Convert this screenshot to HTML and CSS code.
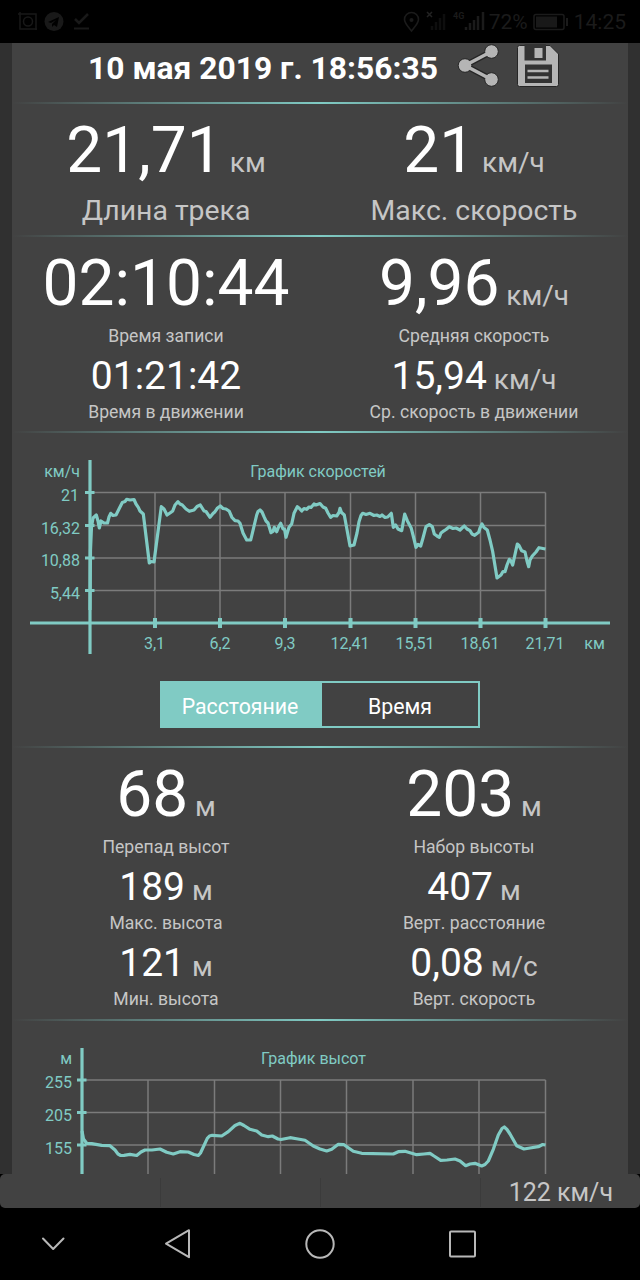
FILE: index.html
```html
<!DOCTYPE html>
<html lang="ru">
<head>
    <meta charset="UTF-8">
    <meta name="viewport" content="width=device-width, initial-scale=1.0">
    <title>10 мая 2019 г. 18:56:35</title>
    <link rel="stylesheet" href="styles.css">
</head>
<body>

    <div class="status-bar">
        <svg class="status-icons" width="76" height="22" viewBox="16 11 76 22">
            <path d="M18 14h18v16M20 12v17h17" fill="none" stroke="#181818" stroke-width="1.5"/>
            <circle cx="28" cy="21.5" r="4.500" fill="none" stroke="#181818" stroke-width="1.500"/>
            <circle cx="54" cy="21.5" r="9.500" fill="#191919"/>
            <path d="M48 22l11-5-2 10-3-2-2 2v-3l4-4-5 3z" fill="#000"/>
            <path d="M75 19l4 4 9-9" fill="none" stroke="#191919" stroke-width="2.5"/>
            <path d="M74 28.5h15" stroke="#191919" stroke-width="2"/>
        </svg>
        <div class="status-right">
            <svg width="84" height="22" viewBox="400 11 84 22">
                <path d="M408.500 31c-4-5-7-8-7-11.500a7 7 0 0 1 14 0c0 3.500-3 6.500-7 11.500z" fill="none" stroke="#1b1b1b" stroke-width="1.600"/>
                <circle cx="408.500" cy="20" r="2" fill="#1b1b1b"/>
                <path d="M424 12l5 5m0-5l-5 5" stroke="#222" stroke-width="1.500"/>
                <path d="M429 30v-4m4 4v-8m4 8v-12m4 12v-16" stroke="#0e0e0e" stroke-width="2.500"/>
                <path d="M463 30v-3m4 3v-7m4 7v-10m4 10v-14m5 14v-18" stroke="#1b1b1b" stroke-width="2.500"/>
                <text class="network" x="450" y="19">4G</text>
            </svg>
            <span class="percent">72%</span>
            <svg class="battery" width="36" height="18" viewBox="0 0 36 18">
                <rect x="1" y="1.500" width="30" height="15" rx="2" fill="none" stroke="#1b1b1b" stroke-width="1.500"/>
                <rect x="3" y="3.500" width="21" height="11" fill="#191919"/>
                <path d="M34 5v8" stroke="#1b1b1b" stroke-width="2"/>
            </svg>
            <span class="clock">14:25</span>
        </div>
    </div>

    <div class="screen">
        <div class="panel">
            <div class="header">
                <h1>10 мая 2019 г. 18:56:35</h1>
                <svg class="share-icon" width="42" height="44" viewBox="457 44 42 44">
                    <path d="M491.500 51.500L465 65.500l26.500 14" fill="none" stroke="#262626" stroke-width="6"/>
                    <g fill="#b5b5b5" stroke="#262626" stroke-width="1">
                        <circle cx="491.500" cy="51.500" r="6.800"/>
                        <circle cx="465" cy="65.500" r="6.800"/>
                        <circle cx="491.500" cy="79.500" r="6.800"/>
                    </g>
                    <path d="M491.500 51.500L465 65.500l26.500 14" fill="none" stroke="#b5b5b5" stroke-width="3.500"/>
                </svg>
                <svg class="save-icon" width="42" height="44" viewBox="517 44 42 44">
                    <path d="M519.500 45.500h30.500l8.500 8.500v30.500a2 2 0 0 1-2 2h-37a2 2 0 0 1-2-2v-37a2 2 0 0 1 2-2z" fill="#b5b5b5" stroke="#262626"/>
                    <path d="M524.500 44h21.500v16.500h-21.500z" fill="#333"/>
                    <rect x="534.500" y="48" width="8" height="10" fill="#b5b5b5"/>
                    <rect x="525" y="64.500" width="27" height="18.500" fill="#333"/>
                    <path d="M527.500 71h21M527.500 77.500h21" stroke="#b5b5b5" stroke-width="2.300"/>
                </svg>
            </div>
            <div class="separator"></div>

            <div class="stats stats-track">
                <div class="column">
                    <div class="value big">21,71<span class="unit"> км</span></div>
                    <div class="label large">Длина трека</div>
                </div>
                <div class="column">
                    <div class="value big">21<span class="unit"> км/ч</span></div>
                    <div class="label large">Макс. скорость</div>
                </div>
            </div>
            <div class="separator"></div>

            <div class="stats stats-time">
                <div class="column">
                    <div class="value big">02:10:44</div>
                    <div class="label">Время записи</div>
                    <div class="value">01:21:42</div>
                    <div class="label">Время в движении</div>
                </div>
                <div class="column">
                    <div class="value big">9,96<span class="unit"> км/ч</span></div>
                    <div class="label">Средняя скорость</div>
                    <div class="value">15,94<span class="unit"> км/ч</span></div>
                    <div class="label">Ср. скорость в движении</div>
                </div>
            </div>
            <div class="separator"></div>

            <div class="chart-section">
                <svg class="chart" width="616" height="248" viewBox="12 433 616 248">
                    <path class="grid" d="M90 492.500H545.500M90 525.500H545.500M90 558H545.500M90 590.500H545.500M155 492.500V623M220 492.500V623M285 492.500V623M350.500 492.500V623M415.500 492.500V623M480.500 492.500V623M545.500 492.500V623"/>
                    <path class="axis" d="M90 460V654M30 623H610M85 492.500H94.500M85 525.500H94.500M85 558H94.500M85 590.500H94.500"/>
                    <path class="tick" d="M155 618V628M220 618V628M285 618V628M350.500 618V628M415.500 618V628M480.500 618V628M545.500 618V628"/>
                    <polyline class="line" points="90,610 90.500,550 91.500,527 93,518 96.300,515 98,521 99.300,528 101,521 104,523 107.500,523 109,517 110.700,513.300 113,515.500 116,515 119,509 122.300,502.500 125,501.500 126.700,499.300 130,500 134,499.500 136,504 138.300,507.300 140,511 143.300,514 149.300,563 151,561.500 154,562 161.300,506.700 164,509 167,515 170,513 172.700,511 175,505 178,501.700 180,504 182.300,505 186,509 189.300,511.300 194,510 197,506.500 200.300,505 204,511 206,511.500 210,517.300 213,513.500 215,511.700 217.500,508 220.300,506 223,508.500 226,509 229.300,511.300 232,517.500 235,520.700 238,521 240,523.300 243,533 246.700,540 250.700,540 256.700,515 258,511.500 260,510 262,512 264,516.700 266,521 268,523 271,532.700 273,531.500 274.300,527.300 276.700,531.700 279,526 280.700,523.300 283,529 284.500,529 286,537.300 289,527.300 291.700,524 294,513.300 297.300,506.700 299,508 301.700,511 304,508.500 306.700,509.300 309,507 311,507.500 314,504 316,505 320,503.500 323,507 325.700,508.300 328,513 330.700,517.300 333,515.500 336.700,516 339,512.500 340,508.300 341.500,512.500 344.300,515 350,546 354,545 357,533 359,521.700 361,515.500 362.700,513.300 366,514.500 370,513.300 374,515.500 376.700,515 380,516.500 382,515 385,517.500 387.700,517 391.300,513.300 393.300,527.300 395.700,525 398,529 401.700,530.700 404.700,514 407.300,520.700 411.300,528.300 414,539 416,547.300 418,544.500 420.700,546 423,538 426,526.700 429.300,524.700 432.300,526.700 434.300,534 437,536 439.300,537.300 441,533 442.700,531.700 446,529.500 449.300,526.700 453,528.500 456,528 460,530 462,528 464.300,526 467,529 470,530.700 472,534 474.700,535.300 477,533.500 478.700,532.300 480,528 482,524 484,527.500 487.300,530 490,540 492.700,551.700 497,578 501,575 503,571.500 505,571.700 507,565 509.300,559.300 511,561 512.700,565 517.300,544 519,545.500 521.700,550.700 525,552 527,561 528.700,566.700 530,560 532.300,556 536,552 539,547.700 545.500,549"/>
                    <g class="y-labels">
                        <text x="80" y="477">км/ч</text>
                        <text x="79" y="501">21</text>
                        <text x="80" y="533.500">16,32</text>
                        <text x="80" y="566">10,88</text>
                        <text x="80" y="598.500">5,44</text>
                    </g>
                    <g class="x-labels">
                        <text x="318" y="477">График скоростей</text>
                        <text x="154.500" y="649">3,1</text>
                        <text x="220" y="649">6,2</text>
                        <text x="285" y="649">9,3</text>
                        <text x="350" y="649">12,41</text>
                        <text x="415" y="649">15,51</text>
                        <text x="480" y="649">18,61</text>
                        <text x="545" y="649">21,71</text>
                        <text x="594.500" y="649">км</text>
                    </g>
                </svg>
                <div class="toggle">
                    <div class="toggle-item active">Расстояние</div>
                    <div class="toggle-item">Время</div>
                </div>
            </div>
            <div class="separator"></div>

            <div class="stats stats-height">
                <div class="column">
                    <div class="value big">68<span class="unit"> м</span></div>
                    <div class="label">Перепад высот</div>
                    <div class="value">189<span class="unit"> м</span></div>
                    <div class="label">Макс. высота</div>
                    <div class="value">121<span class="unit"> м</span></div>
                    <div class="label">Мин. высота</div>
                </div>
                <div class="column">
                    <div class="value big">203<span class="unit"> м</span></div>
                    <div class="label">Набор высоты</div>
                    <div class="value">407<span class="unit"> м</span></div>
                    <div class="label">Верт. расстояние</div>
                    <div class="value">0,08<span class="unit"> м/с</span></div>
                    <div class="label">Верт. скорость</div>
                </div>
            </div>
            <div class="separator"></div>

            <svg class="chart" width="616" height="153" viewBox="12 1021 616 153">
                <path class="grid" d="M82 1080H545.500M82 1112.500H545.500M82 1145H545.500M148 1080V1180M214.500 1080V1180M280.500 1080V1180M346.500 1080V1180M413 1080V1180M479 1080V1180M545.500 1080V1180"/>
                <path class="axis" d="M82 1048V1180M77 1080H86.500M77 1112.500H86.500M77 1145H86.500"/>
                <polyline class="line" points="82,1131 83.500,1139 86.700,1143.300 91.700,1143.700 101.700,1145.300 110,1145.700 115,1150 118,1154 120.700,1155.500 124,1155.300 130,1154.300 136.700,1155.500 141,1152 145,1150 152,1150 160,1149 166.700,1152.300 173.300,1154 180,1151.700 188.300,1152 194,1154.500 198.300,1155.500 200.500,1153 202.700,1148.300 207.300,1138.300 209.500,1136 212.300,1135.300 221.700,1136 228.300,1131.700 235,1125.500 240,1123.300 244,1125.500 250,1129.300 256.700,1131 261.700,1135 268.300,1136.700 272.300,1136 278,1139 281,1139.500 290,1137.700 298,1139 305,1140.300 313.300,1146 320,1149 326.700,1151 331.700,1149.300 338.300,1144.300 344,1144.700 353.300,1151.300 361.700,1153.300 393.300,1154 398.300,1151.700 405,1151.300 416.700,1154.700 424,1154 430,1153.300 434,1156 440.700,1160.300 447,1160 455,1159 460,1161 465.700,1165.700 470,1164 475,1163.300 481.700,1166 485,1164.500 488.300,1161 493.300,1149.300 498.300,1135 502,1128.500 504.300,1127 507,1129.500 510,1134 516.700,1145.700 524,1149 530,1148 538.300,1146.700 542.700,1144.500 545.500,1145"/>
                <g class="y-labels">
                    <text x="72" y="1064">м</text>
                    <text x="72" y="1088">255</text>
                    <text x="72" y="1121">205</text>
                    <text x="72" y="1153.500">155</text>
                </g>
                <g class="x-labels">
                    <text x="313.500" y="1064">График высот</text>
                </g>
            </svg>
        </div>
    </div>

    <div class="bottom-bar">
        <div class="cell"></div>
        <div class="cell"></div>
        <div class="cell"></div>
        <div class="cell speed">122 км/ч</div>
    </div>

    <div class="nav-bar">
        <svg width="640" height="72" viewBox="0 1208 640 72">
            <g fill="none" stroke="#b8b8b8" stroke-width="2" stroke-linejoin="round" stroke-linecap="round">
                <path d="M43 1238.500l10.200 10.500 10.300-10.500"/>
                <path d="M166 1243.700l23-13.500v27z"/>
                <circle cx="320" cy="1244" r="13.700"/>
                <rect x="450" y="1231.500" width="25" height="25" rx="1"/>
            </g>
        </svg>
    </div>

</body>
</html>
```
FILE: styles.css
```css
* {
    box-sizing: border-box;
}

body {
    width: 640px;
    height: 1280px;
    margin: 0;
    display: flex;
    flex-direction: column;
    overflow: hidden;
    background-color: #000;
    color: #fff;
    font-family: Roboto, sans-serif;
}

svg {
    display: block;
    flex-shrink: 0;
}

.status-bar {
    height: 43px;
    flex-shrink: 0;
    display: flex;
    justify-content: space-between;
    align-items: center;
    padding: 0 14px 0 16px;
    color: #1b1b1b;
    font-size: 21px;
}

.status-right {
    display: flex;
    align-items: center;
}

.network {
    font-size: 9px;
    font-weight: bold;
    fill: #1b1b1b;
}

.percent {
    margin-left: 2px;
}

.battery {
    margin-left: 5px;
}

.clock {
    margin-left: 5px;
}

.screen {
    height: 1131px;
    flex-shrink: 0;
    padding: 0 12px;
    overflow: hidden;
    background-color: #303030;
}

.panel {
    background-color: #424242;
}

.header {
    height: 59px;
    display: flex;
    align-items: flex-start;
    padding: 1px 0 0 76px;
}

h1 {
    width: 369px;
    margin: 5px 0 0;
    font-size: 31.8px;
    line-height: 38px;
    white-space: nowrap;
}

.save-icon {
    margin-left: 18px;
}

.separator {
    height: 2px;
    background: linear-gradient(to right, #424242, #80cbc4, #424242);
}

.stats {
    display: grid;
    grid-template-columns: 1fr 1fr;
    padding-top: 9px;
    text-align: center;
    white-space: nowrap;
}

.stats-track {
    height: 131px;
}

.stats-time {
    height: 194px;
}

.stats-height {
    height: 271px;
}

.value {
    height: 47px;
    margin-top: 6px;
    font-size: 39px;
    line-height: 47px;
}

.value.big {
    height: 75px;
    margin: 0 0 5px;
    font-size: 64px;
    line-height: 75px;
}

.unit {
    font-size: 28px;
    color: #c6c6c6;
}

.label {
    height: 21px;
    font-size: 17.6px;
    line-height: 21px;
    color: #c6c6c6;
}

.value:not(.big) + .label {
    margin-top: 2px;
}

.label.large {
    height: 33px;
    margin-top: 6px;
    font-size: 28.4px;
    line-height: 33px;
}

.chart-section {
    height: 313px;
}

.chart .grid {
    fill: none;
    stroke: #7b7b7b;
    stroke-width: 1.5;
}

.chart .axis {
    fill: none;
    stroke: #80cbc4;
    stroke-width: 3.2;
}

.chart .tick {
    stroke: #80cbc4;
    stroke-width: 4;
}

.chart .line {
    fill: none;
    stroke: #80cbc4;
    stroke-width: 3.2;
    stroke-linejoin: round;
}

.chart text {
    fill: #80cbc4;
    font-size: 16px;
}

.y-labels {
    text-anchor: end;
}

.x-labels {
    text-anchor: middle;
}

.toggle {
    width: 320px;
    height: 47px;
    margin: 0 auto;
    display: flex;
    border: 2px solid #80cbc4;
}

.toggle-item {
    flex: 1;
    font-size: 21.3px;
    line-height: 47px;
    text-align: center;
}

.toggle-item.active {
    flex: 0 0 160px;
    height: 43px;
    padding-right: 4px;
    background-color: #80cbc4;
}

.bottom-bar {
    height: 34px;
    flex-shrink: 0;
    display: grid;
    grid-template-columns: repeat(4, 1fr);
    border-radius: 5px;
    background-color: #424242;
}

.cell {
    margin: 4px 0;
    border-left: 1px solid #3b3b3b;
}

.cell:first-child {
    border-left: none;
}

.speed {
    padding-right: 27px;
    font-size: 25px;
    line-height: 29px;
    text-align: right;
    color: #c6c6c6;
}

.nav-bar {
    height: 72px;
}
```
